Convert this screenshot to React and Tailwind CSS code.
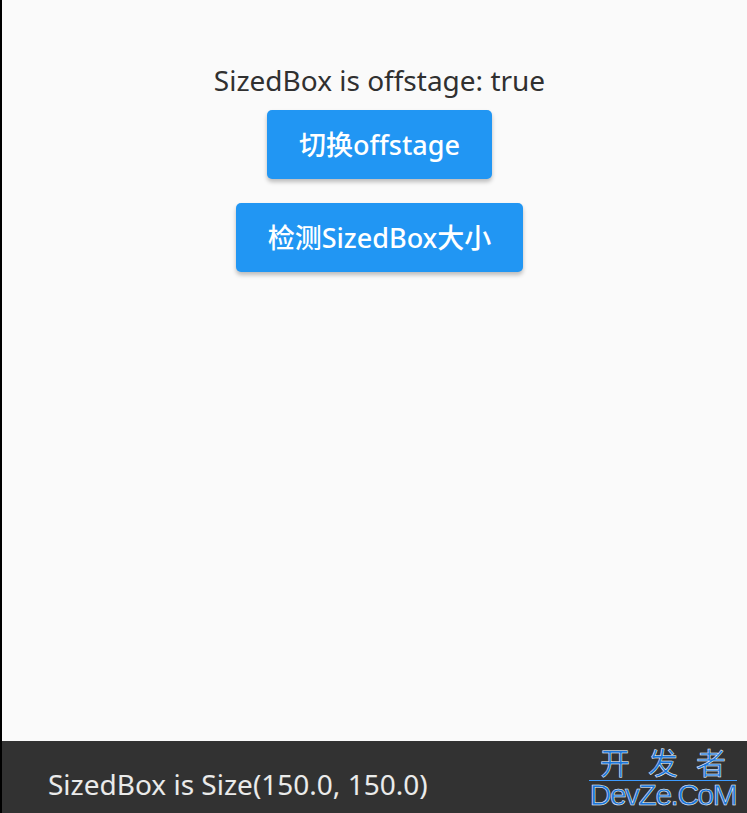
import React from "react";

// Flutter demo page: Offstage toggle + size check, with a snackbar at the bottom.
function BlueButton({ children }) {
    return (
        <button
            type="button"
            className="h-[69px] px-8 rounded-[5px] bg-[#2196f3] text-white text-[27px] font-medium shadow-[0_3px_4px_rgba(0,0,0,0.25)] leading-none"
        >
            {children}
        </button>
    );
}

function Watermark() {
    return (
        <div className="absolute right-[10px] top-[3px] flex flex-col items-center text-[#1a74d8] [-webkit-text-stroke:0.5px_white]">
            <div className="flex gap-[18px] text-[30px] leading-[34px] font-['Noto_Sans_CJK_SC',sans-serif]">
                <span>开</span>
                <span>发</span>
                <span>者</span>
            </div>
            <div className="mt-[2px] w-[148px] border-t border-[#3d9bff]" />
            <div className="text-[30px] leading-[28px] tracking-[-1.5px] font-['Liberation_Sans_Narrow','Liberation_Sans',sans-serif]">
                DevZe.CoM
            </div>
        </div>
    );
}

export default function App() {
    return (
        <div className="h-[813px] w-[747px] flex flex-col bg-[#fafafa] border-l-2 border-black font-['Noto_Sans','Noto_Sans_CJK_SC',sans-serif] overflow-hidden">
            <div className="flex-1 flex flex-col items-center pl-[10px] pt-[61px]">
                <p className="text-[28px] leading-[38px] text-[#303030]">SizedBox is offstage: true</p>
                <div className="mt-[11px] flex flex-col items-center gap-[24px]">
                    <BlueButton>切换offstage</BlueButton>
                    <BlueButton>检测SizedBox大小</BlueButton>
                </div>
            </div>
            <div className="relative h-[72px] bg-[#323232] flex items-center pl-[46px]">
                <span className="text-[28px] text-white/90 pt-[14px]">SizedBox is Size(150.0, 150.0)</span>
                <Watermark />
            </div>
        </div>
    );
}
